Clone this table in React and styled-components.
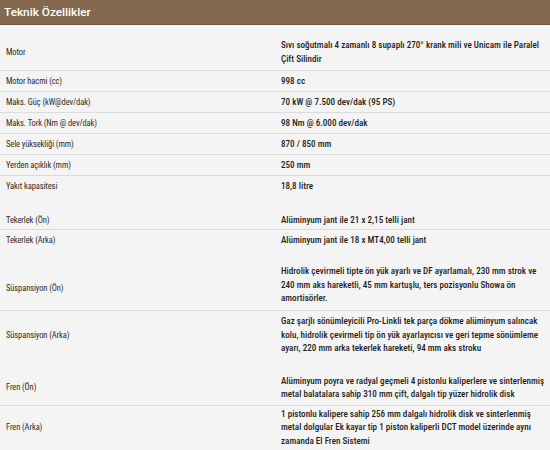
import React from 'react';
import styled, { createGlobalStyle } from 'styled-components';

const Global = createGlobalStyle`
  body {
    margin: 0;
    background: #f4f4f4;
    font-family: "Roboto Condensed", Roboto, "Liberation Sans", sans-serif;
  }
`;

const Panel = styled.section`
  width: 550px;
  height: 450px;
  overflow: hidden;
  background: #f4f4f4;
`;

const Header = styled.h2`
  margin: 0;
  height: 24px;
  padding: 0 4px;
  display: flex;
  align-items: center;
  background: #84694f;
  border-bottom: 1px solid #6f5741;
  color: #fff;
  font-family: Roboto, "Liberation Sans", sans-serif;
  font-size: 11.8px;
  font-weight: 500;
`;

const Row = styled.div`
  display: grid;
  grid-template-columns: 275px 1fr;
  align-items: center;
  padding: ${(p) => p.$pt}px 0 ${(p) => p.$pb}px;
  border-bottom: ${(p) => (p.$line ? '1px solid #dcdcdc' : 'none')};
  line-height: 13.5px;
`;

const Label = styled.div`
  padding-left: 6px;
  color: #2b2b2b;
  font-size: 8.5px;
  font-weight: 400;
  letter-spacing: -0.1px;
  position: relative;
  top: ${(p) => p.$shift || 0}px;
`;

const Value = styled.div`
  padding: 0 6px;
  color: #1e1e1e;
  font-size: 9.1px;
  font-weight: 500;
  white-space: nowrap;
`;

const ValueLine = styled.span`
  display: block;
`;

const specs = [
  { label: 'Motor', value: ['Sıvı soğutmalı 4 zamanlı 8 supaplı 270° krank mili ve Unicam ile Paralel', 'Çift Silindir'], pt: 14, pb: 4, line: true },
  { label: 'Motor hacmi (cc)', value: ['998 cc'], pt: 3.5, pb: 3, line: true },
  { label: 'Maks. Güç (kW@dev/dak)', value: ['70 kW @ 7.500 dev/dak (95 PS)'], pt: 3.5, pb: 3, line: true },
  { label: 'Maks. Tork (Nm @ dev/dak)', value: ['98 Nm @ 6.000 dev/dak'], pt: 3.5, pb: 3, line: true },
  { label: 'Sele yüksekliği (mm)', value: ['870 / 850 mm'], pt: 3.5, pb: 3, line: true },
  { label: 'Yerden açıklık (mm)', value: ['250 mm'], pt: 3.5, pb: 3, line: true },
  { label: 'Yakıt kapasitesi', value: ['18,8 litre'], pt: 3.5, pb: 4 },
  { label: 'Tekerlek (Ön)', value: ['Alüminyum jant ile 21 x 2,15 telli jant'], pt: 17, pb: 1, line: true },
  { label: 'Tekerlek (Arka)', value: ['Alüminyum jant ile 18 x MT4,00 telli jant'], pt: 4, pb: 6 },
  {
    label: 'Süspansiyon (Ön)',
    value: [
      'Hidrolik çevirmeli tipte ön yük ayarlı ve DF ayarlamalı, 230 mm strok ve',
      '240 mm aks hareketli, 45 mm kartuşlu, ters pozisyonlu Showa ön',
      'amortisörler.',
    ],
    pt: 12, pb: 4.5, line: true, shift: 3,
  },
  {
    label: 'Süspansiyon (Arka)',
    value: [
      'Gaz şarjlı sönümleyicili Pro-Linkli tek parça dökme alüminyum salıncak',
      'kolu, hidrolik çevirmeli tip ön yük ayarlayıcısı ve geri tepme sönümleme',
      'ayarı, 220 mm arka tekerlek hareketi, 94 mm aks stroku',
    ],
    pt: 4, pb: 5,
  },
  {
    label: 'Fren (Ön)',
    value: [
      'Alüminyum poyra ve radyal geçmeli 4 pistonlu kaliperlere ve sinterlenmiş',
      'metal balatalara sahip 310 mm çift, dalgalı tip yüzer hidrolik disk',
    ],
    pt: 14, pb: 3, line: true,
  },
  {
    label: 'Fren (Arka)',
    value: [
      '1 pistonlu kalipere sahip 256 mm dalgalı hidrolik disk ve sinterlenmiş',
      'metal dolgular Ek kayar tip 1 piston kaliperli DCT model üzerinde aynı',
      'zamanda El Fren Sistemi',
    ],
    pt: 2, pb: 4,
  },
];

export default function App() {
  return (
    <>
      <Global />
      <Panel>
        <Header>Teknik Özellikler</Header>
        {specs.map((s) => (
          <Row key={s.label} $pt={s.pt} $pb={s.pb} $line={s.line}>
            <Label $shift={s.shift}>{s.label}</Label>
            <Value>
              {s.value.map((l) => (
                <ValueLine key={l}>{l}</ValueLine>
              ))}
            </Value>
          </Row>
        ))}
      </Panel>
    </>
  );
}
